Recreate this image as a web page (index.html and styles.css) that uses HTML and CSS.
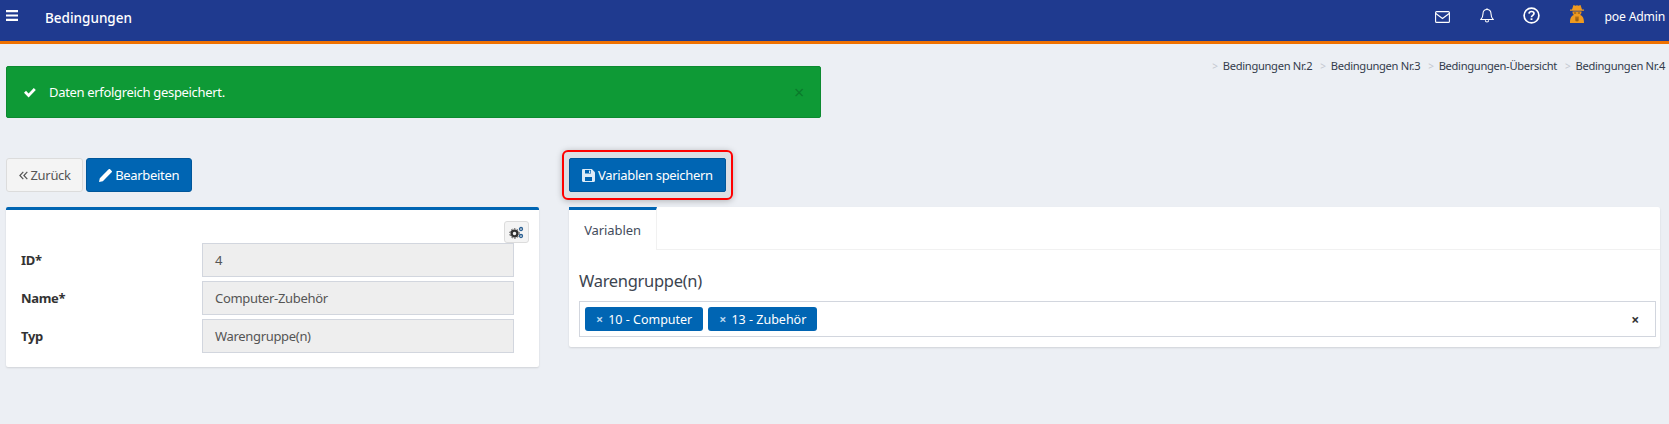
FILE: index.html
```html
<!DOCTYPE html>
<html lang="de">
<head>
  <meta charset="UTF-8">
  <title>Bedingungen</title>
  <link rel="stylesheet" href="styles.css">
</head>
<body>

  <!-- Header -->
  <div class="header">
    <svg class="menu-icon" width="12" height="11" viewBox="0 0 12 11"><path d="M0 0h12v2.200H0zM0 4.400h12v2.200H0zM0 8.800h12V11H0z" fill="#fff"/></svg>
    <div class="page-title">Bedingungen</div>
    <div class="header-right">
      <svg class="head-icon mail" width="15" height="12" viewBox="0 0 15 12" fill="none" stroke="#fff" stroke-width="1.1"><rect x=".6" y=".6" width="13.8" height="10.8" rx="1"/><path d="M.8 2.500l6.700 5 6.700-5"/></svg>
      <svg class="head-icon bell" width="14" height="15" viewBox="0 0 14 15" fill="none" stroke="#fff" stroke-width="1.1"><path d="M7 1.500c-2.600 0-4 1.900-4 4.200 0 3.300-1.200 4.600-2.200 5.800h12.400c-1-1.200-2.200-2.500-2.200-5.800 0-2.300-1.400-4.200-4-4.200z"/><path d="M5.400 12.200c0 1 .7 1.800 1.600 1.800s1.600-.8 1.600-1.800M7 .2v1.300"/></svg>
      <svg class="head-icon help" width="17" height="17" viewBox="0 0 17 17" fill="none" stroke="#fff"><circle cx="8.500" cy="8.500" r="7.400" stroke-width="1.700"/><path d="M6 6.600c.2-1.400 1.200-2.100 2.500-2.100 1.400 0 2.500.8 2.500 2 0 1.900-2.500 1.800-2.500 3.700" stroke-width="1.700"/><path d="M8.500 11.300v1.700" stroke-width="1.900"/></svg>
      <svg class="head-icon spy" width="16" height="18" viewBox="0 0 16 18" fill="#ef9a1f"><path d="M4.500 0l2 .8L8 .3l1.500.5 2-.8L13 4.500h2v1.200H1V4.500h2z"/><path d="M3.500 6.500h9c0 1.800-.6 3-1.500 3.600 2.500.6 4 2.800 4 7.900H1c0-5.100 1.500-7.300 4-7.900-.9-.6-1.500-1.800-1.500-3.600z"/><path d="M4.800 7.500h2.400v1H4.800zM8.800 7.500h2.400v1H8.800zM6.600 11.500h.9l.3 4-.6 1.200-.7-1.200zM8.500 11.500h.9l.1 4-.7 1.200-.6-1.200z" fill="#7a4a10"/></svg>
      <span class="user-name">poe Admin</span>
    </div>
  </div>

  <div class="container">
    <div class="top-row">
      <div class="alert">
        <svg class="alert-check" width="13" height="11" viewBox="0 0 13 11"><path d="M1 5.800l2-2 2.600 2.600L10.800 1l2 2-7.200 7.500z" fill="#fff"/></svg>
        <span>Daten erfolgreich gespeichert.</span>
        <span class="alert-close">×</span>
      </div>
      <div class="breadcrumb">
        <span class="sep">&gt;</span><a href="#">Bedingungen Nr.2</a>
        <span class="sep">&gt;</span><a href="#">Bedingungen Nr.3</a>
        <span class="sep">&gt;</span><a href="#">Bedingungen-Übersicht</a>
        <span class="sep">&gt;</span><a href="#">Bedingungen Nr.4</a>
      </div>
    </div>

    <div class="columns">
      <!-- Stammdaten -->
      <div class="col-left">
        <div class="btn-row">
          <button class="btn btn-light">
            <svg width="9" height="9" viewBox="0 0 9 9" fill="none" stroke="#555" stroke-width="1.200"><path d="M4.300.8L.9 4.500l3.400 3.700M8.300.8L4.900 4.500l3.400 3.700"/></svg>
            Zurück
          </button>
          <button class="btn btn-blue">
            <svg width="13" height="13" viewBox="0 0 13 13" fill="#fff"><path d="M0 13l.8-3.800L8.900 1.100l3 3-8.100 8.100zM9.700.3c.4-.4 1-.4 1.400 0l1.600 1.600c.4.400.4 1 0 1.400l-.8.800-3-3z"/></svg>
            Bearbeiten
          </button>
        </div>
        <div class="panel form-panel">
          <div class="panel-tools">
            <button class="tool-btn">
              <svg width="15" height="13" viewBox="0 0 15 13" fill="none" stroke="#333"><circle cx="5.500" cy="7.500" r="2.900" stroke-width="2.300"/><circle cx="5.500" cy="7.500" r="4.700" stroke-width="1" stroke-dasharray="1.500 1.500"/><circle cx="12" cy="3" r="1.500" stroke="#2a5f92" stroke-width="1.300"/><circle cx="12" cy="10" r="1.500" stroke="#2a5f92" stroke-width="1.300"/></svg>
            </button>
          </div>
          <div class="form-row"><label>ID*</label><div class="field">4</div></div>
          <div class="form-row"><label>Name*</label><div class="field">Computer-Zubehör</div></div>
          <div class="form-row"><label>Typ</label><div class="field">Warengruppe(n)</div></div>
        </div>
      </div>

      <!-- Variablen -->
      <div class="col-right">
        <div class="btn-row">
          <div class="save-mark">
            <button class="btn btn-blue btn-save">
              <svg width="13" height="13" viewBox="0 0 13 13"><path d="M0 1.200C0 .5.500 0 1.200 0h8.600L13 3.200v8.600c0 .7-.5 1.200-1.200 1.200H1.200C.5 13 0 12.500 0 11.800z" fill="#dcebf7"/><path d="M3 1h6v3.500H3zM3 8h7v4H3z" fill="#0065b3"/><path d="M7 1.600h1.300v2.300H7z" fill="#dcebf7"/></svg>
              Variablen speichern
            </button>
          </div>
        </div>
        <div class="panel tabs-panel">
          <div class="tabs">
            <div class="tab">Variablen</div>
          </div>
          <div class="tab-body">
            <h3>Warengruppe(n)</h3>
            <div class="select-box">
              <span class="tag"><span class="tag-x">×</span>10 - Computer</span>
              <span class="tag"><span class="tag-x">×</span>13 - Zubehör</span>
              <span class="select-clear">×</span>
            </div>
          </div>
        </div>
      </div>
    </div>
  </div>

</body>
</html>
```
FILE: styles.css
```css
* {
  margin: 0;
  padding: 0;
  box-sizing: border-box;
}

body {
  font-family: 'Noto Sans', sans-serif;
  font-size: 13px;
  letter-spacing: -0.32px;
  color: #3c4858;
  background-color: #eceff4;
  height: 424px;
  overflow: hidden;
}

/* Header */
.header {
  display: flex;
  align-items: center;
  height: 44px;
  padding: 0 4px 6px 6px;
  background-color: #1f3a8f;
  border-bottom: 3px solid #ef7100;
  color: #fff;
}

.menu-icon {
  margin-bottom: 4px;
}

.page-title {
  margin-left: 27px;
  font-size: 13.5px;
  font-weight: 500;
  letter-spacing: 0;
}

.header-right {
  display: flex;
  align-items: center;
  margin-left: auto;
  margin-bottom: 2px;
}

.head-icon {
  margin-right: 29px;
}

.head-icon.mail {
  margin-right: 30px;
}

.head-icon.bell,
.head-icon.help {
  margin-bottom: 2px;
}

.head-icon.spy {
  margin-right: 20px;
  margin-bottom: 5px;
}

.user-name {
  font-size: 12.2px;
  letter-spacing: -0.2px;
}

/* Alert + Breadcrumb */
.container {
  padding: 22px 9px 0 6px;
}

.top-row {
  display: flex;
  justify-content: space-between;
  align-items: flex-start;
}

.alert {
  display: flex;
  align-items: center;
  width: 815px;
  height: 52px;
  padding: 0 16px;
  background-color: #0e9a36;
  border: 1px solid #0c8a30;
  border-radius: 2px;
  color: #fff;
}

.alert-check {
  margin-right: 13px;
}

.alert-close {
  margin-left: auto;
  color: #0a7a2b;
  font-size: 18px;
  line-height: 1;
}

.breadcrumb {
  display: flex;
  align-items: center;
  margin-top: -8px;
  margin-right: -5px;
  font-size: 11.15px;
  letter-spacing: -0.3px;
}

.breadcrumb a {
  color: #333c4c;
  text-decoration: none;
}

.breadcrumb .sep {
  margin: 0 5px 0 8px;
  color: #c4c8d0;
  font-size: 10px;
}

/* Columns */
.columns {
  display: flex;
  gap: 30px;
  margin-top: 40px;
}

.col-left {
  width: 533px;
}

.col-right {
  flex: 1;
}

.btn-row {
  display: flex;
  gap: 3px;
  height: 34px;
  margin-bottom: 15px;
}

.btn {
  display: flex;
  align-items: center;
  gap: 3px;
  height: 34px;
  padding: 0 12px;
  border-radius: 3px;
  font-family: inherit;
  font-size: 13px;
  letter-spacing: inherit;
  cursor: pointer;
}

.btn-light {
  padding: 0 11.5px;
  background-color: #f4f4f4;
  border: 1px solid #dcdcdc;
  color: #555;
}

.btn-blue {
  background-color: #0065b3;
  border: 1px solid #00569a;
  color: #fff;
}

.btn-save {
  border-radius: 2px;
}

/* Rote Markierung um den Speichern-Button */
.save-mark {
  align-self: flex-start;
  margin: -8px -7px;
  padding: 6px 5px;
  background-color: #dcdfe4;
  border: 2px solid #f00;
  border-radius: 6px;
  box-shadow: 0 1px 6px rgba(0, 0, 0, 0.25);
}

/* Panels */
.panel {
  background-color: #fff;
  border-radius: 2px;
  box-shadow: 0 1px 2px rgba(0, 0, 0, 0.12);
}

.form-panel {
  height: 160px;
  padding: 11px 10px 0 15px;
  border-top: 3px solid #0065b3;
}

.panel-tools {
  display: flex;
  justify-content: flex-end;
  height: 22px;
}

.tool-btn {
  display: flex;
  align-items: center;
  justify-content: center;
  width: 25px;
  height: 22px;
  background-color: #f4f4f4;
  border: 1px solid #dcdcdc;
  border-radius: 3px;
}

.form-row {
  display: flex;
  align-items: center;
  height: 34px;
  margin-bottom: 4px;
}

.form-row label {
  flex-shrink: 0;
  width: 181px;
  font-weight: 700;
  color: #333;
}

.field {
  width: 312px;
  height: 34px;
  padding: 0 12px;
  line-height: 32px;
  background-color: #eeeeee;
  border: 1px solid #d2d6de;
  color: #555;
}

.tabs-panel {
  height: 140px;
}

.tabs {
  height: 43px;
  border-bottom: 1px solid #f1f1f1;
}

.tab {
  width: 88px;
  height: 43px;
  background-color: #fff;
  border-top: 3px solid #0065b3;
  border-right: 1px solid #f1f1f1;
  text-align: center;
  line-height: 40px;
  color: #444c5c;
  letter-spacing: -0.1px;
}

.tab-body {
  padding: 0 4px 0 10px;
}

.tab-body h3 {
  margin-top: 19px;
  font-size: 16.5px;
  font-weight: 400;
  line-height: 23px;
  letter-spacing: -0.3px;
  color: #3c4450;
}

.select-box {
  display: flex;
  align-items: center;
  gap: 5px;
  height: 36px;
  margin-top: 9px;
  padding: 0 16px 0 5px;
  border: 1px solid #d2d6de;
}

.tag {
  display: flex;
  align-items: center;
  height: 24px;
  padding: 0 11px;
  background-color: #0065b3;
  border-radius: 3px;
  color: #fff;
  font-size: 12.5px;
  letter-spacing: 0;
}

.tag-x {
  margin-right: 5px;
  color: #b7d6ee;
  font-weight: 700;
}

.select-clear {
  margin-left: auto;
  font-weight: 700;
  color: #333;
  font-size: 14px;
}
```
